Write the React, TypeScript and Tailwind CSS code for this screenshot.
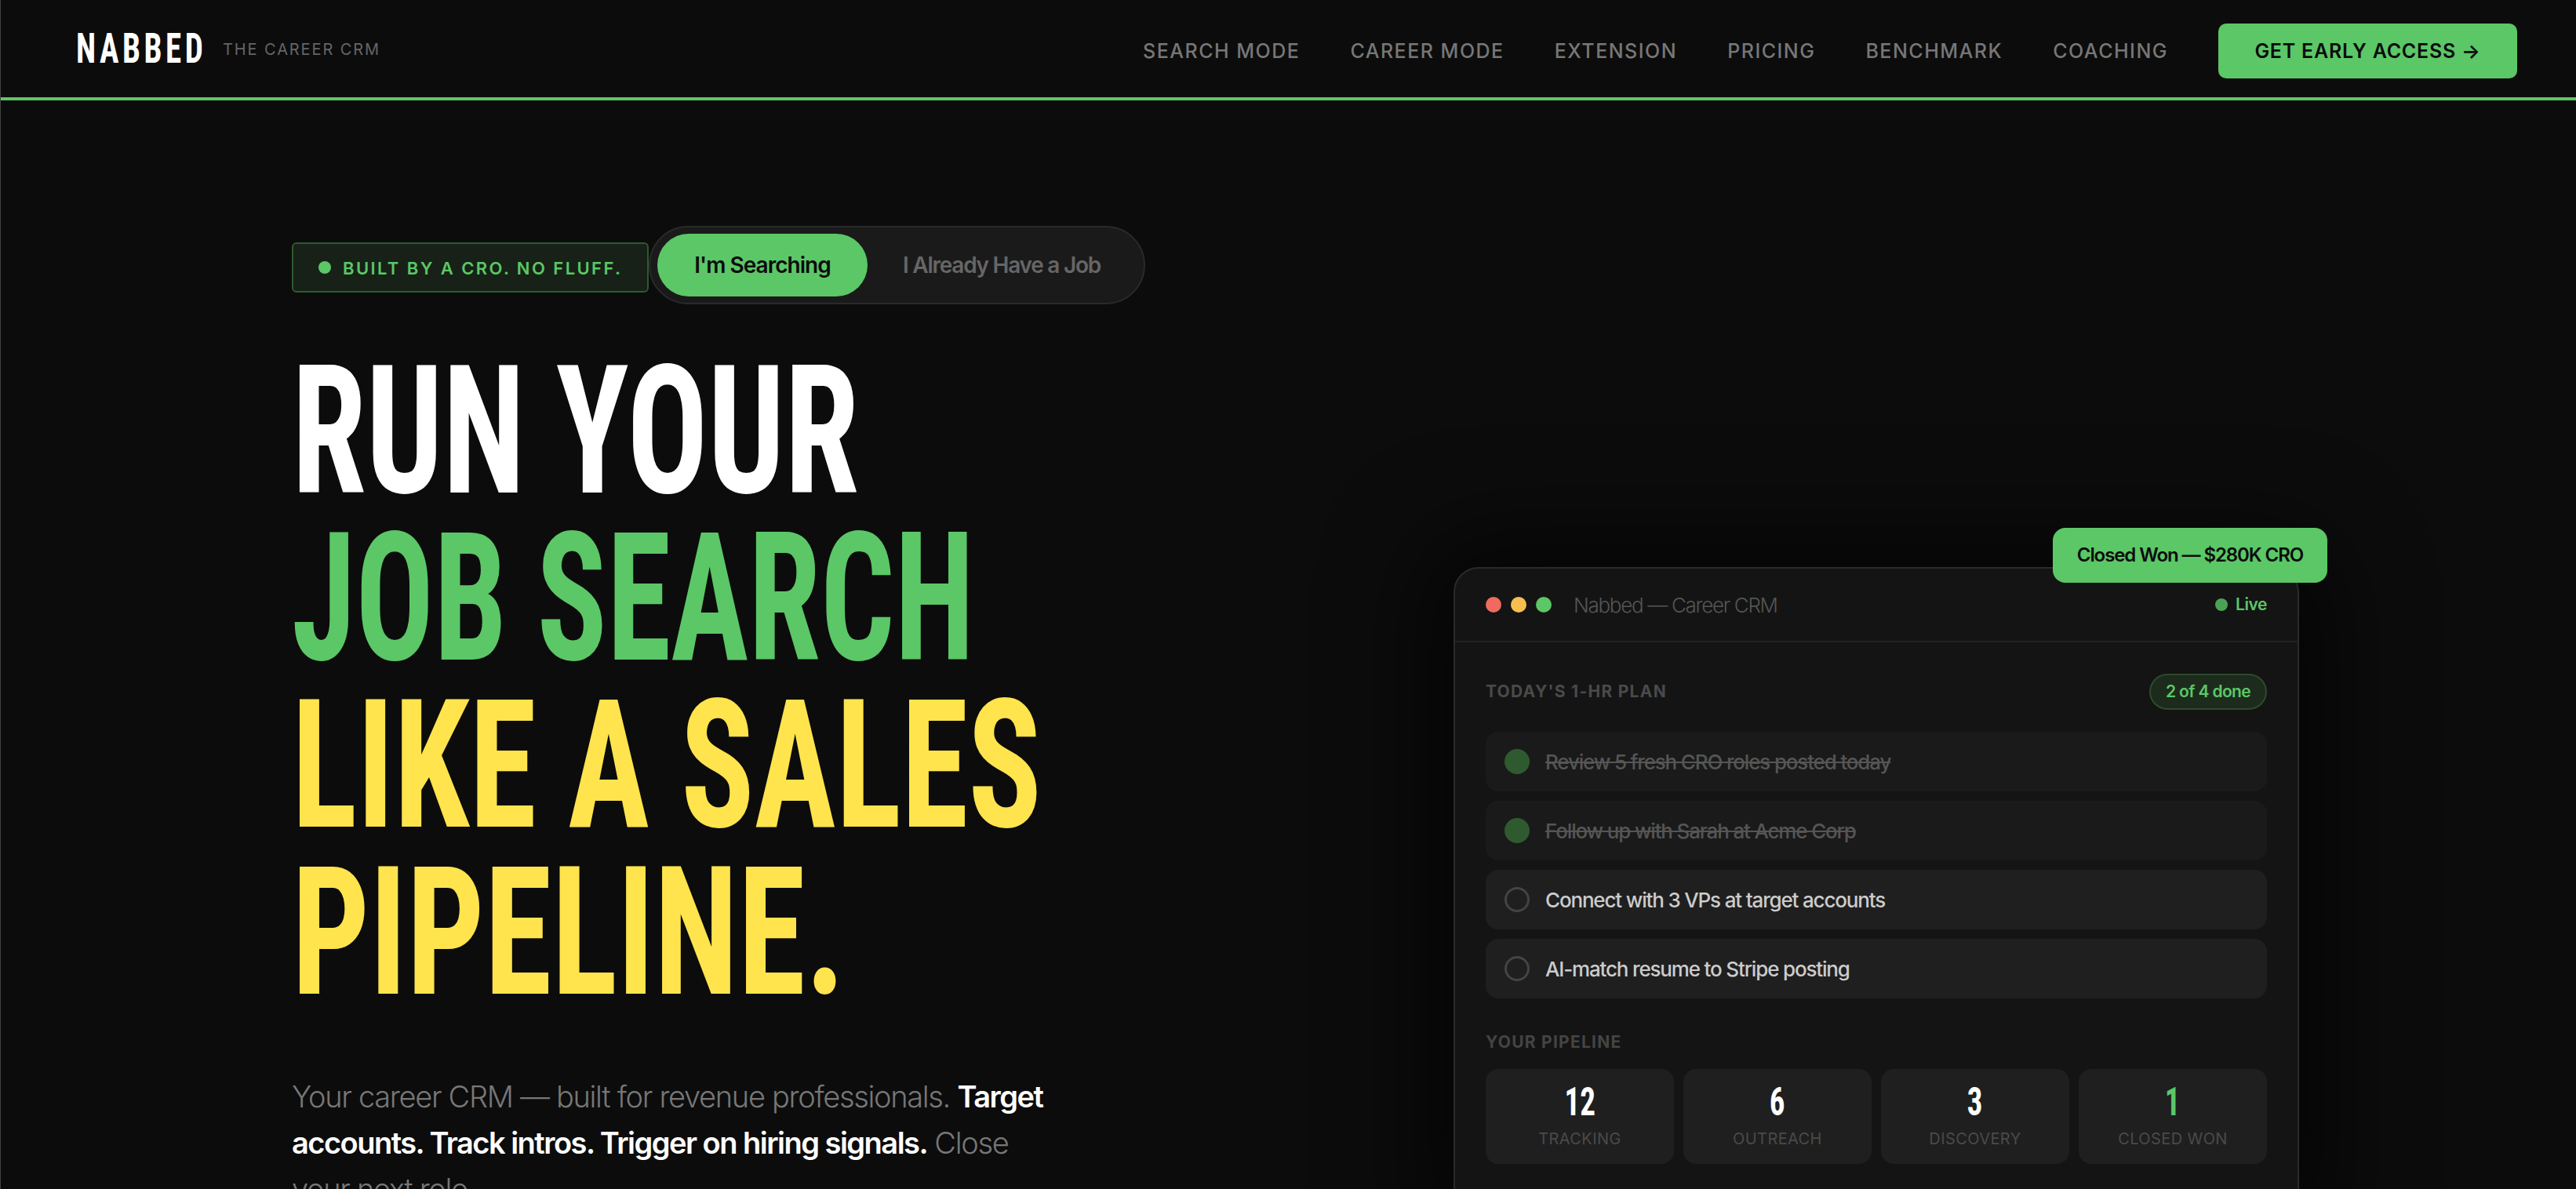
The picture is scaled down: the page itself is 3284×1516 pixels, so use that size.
const display = "font-['Roboto',sans-serif] [font-stretch:75%]";

const navLinks = ["SEARCH MODE", "CAREER MODE", "EXTENSION", "PRICING", "BENCHMARK", "COACHING"];

const tasks = [
  { label: "Review 5 fresh CRO roles posted today", done: true },
  { label: "Follow up with Sarah at Acme Corp", done: true },
  { label: "Connect with 3 VPs at target accounts", done: false },
  { label: "AI-match resume to Stripe posting", done: false },
];

const stats = [
  { value: "12", label: "TRACKING" },
  { value: "6", label: "OUTREACH" },
  { value: "3", label: "DISCOVERY" },
  { value: "1", label: "CLOSED WON", won: true },
];

function Nav() {
  return (
    <nav className="flex h-[128px] items-center justify-between border-b-4 border-[#5bc766] pl-[96px] pr-[75px]">
      <div className="flex items-center gap-[26px]">
        <span className={`${display} block w-[161px] origin-left scale-x-[0.76] text-[54px] leading-none font-bold tracking-[0.11em] whitespace-nowrap text-white`}>
          NABBED
        </span>
        <span className="mt-[2px] text-[20px] font-normal tracking-[0.095em] text-[#666]">THE CAREER CRM</span>
      </div>
      <div className="mt-[6px] flex items-center gap-[64px]">
        {navLinks.map((link) => (
          <a key={link} className="pt-[2px] text-[25px] font-medium tracking-[0.06em] text-[#777]">
            {link}
          </a>
        ))}
        <a className="flex h-[70px] w-[381px] items-center justify-center rounded-[10px] bg-[#5bc766] pt-[2px] text-[25px] font-semibold tracking-[0.03em] text-[#0c0c0c]">
          GET EARLY ACCESS →
        </a>
      </div>
    </nav>
  );
}

function Hero() {
  return (
    <div className="w-[1399px] shrink-0 pt-[160px] pl-[371px]">
      <div className="flex items-start">
        <div className="mt-[21px] flex h-[64px] w-[455px] shrink-0 items-center gap-[15px] rounded-[6px] border-2 border-[#2d5a2f] bg-[#172117] pl-[32px]">
          <span className="size-[16px] rounded-full bg-[#5bc766]" />
          <span className="pt-[2px] text-[22px] font-semibold tracking-[0.11em] whitespace-nowrap text-[#5bc766]">BUILT BY A CRO. NO FLUFF.</span>
        </div>
        <div className="flex h-[100px] w-[633px] shrink-0 items-center rounded-full border-2 border-[#2a2a2a] bg-[#1a1a1a] pl-[9px]">
          <span className="flex h-[80px] w-[268px] items-center justify-center rounded-full bg-[#5bc766] text-[28px] font-semibold tracking-[-0.035em] text-[#0c0c0c]">
            I'm Searching
          </span>
          <span className="flex h-[80px] flex-1 items-center justify-center pr-[10px] text-[28px] font-semibold tracking-[-0.045em] text-[#666]">
            I Already Have a Job
          </span>
        </div>
      </div>

      <h1 className={`${display} mt-[56px] text-[228px] leading-[213px] font-bold whitespace-nowrap text-white`}>
        <div className="origin-left scale-x-[0.751]">RUN YOUR</div>
        <div className="origin-left scale-x-[0.727] text-[#5bc766]">JOB SEARCH</div>
        <div className="origin-left scale-x-[0.763] text-[#ffe44d]">LIKE A SALES</div>
        <div className="origin-left scale-x-[0.766] text-[#ffe44d]">PIPELINE.</div>
      </h1>

      <p className="mt-[73px] text-[38px] leading-[59px] font-light tracking-[-0.035em] whitespace-nowrap text-[#777]">
        Your career CRM — built for revenue professionals.{" "}
        <strong className="font-semibold tracking-[-0.04em] text-white">Target</strong>
        <br />
        <strong className="font-semibold tracking-[-0.04em] text-white">accounts. Track intros. Trigger on hiring signals.</strong> Close
        <br />
        your next role.
      </p>
    </div>
  );
}

function TaskRow({ label, done }: { label: string; done: boolean }) {
  return (
    <div className={`flex h-[76px] items-center gap-[20px] rounded-[16px] pl-[24px] ${done ? "bg-[#1a1a1a]" : "bg-[#1f1f1f]"}`}>
      {done ? (
        <span className="size-[32px] rounded-full bg-[#2f5a2f]" />
      ) : (
        <span className="size-[32px] rounded-full border-[3px] border-[#444]" />
      )}
      <span className={`text-[26px] font-medium tracking-[-0.045em] ${done ? "text-[#555] line-through" : "text-[#ccc]"}`}>
        {label}
      </span>
    </div>
  );
}

function CrmCard() {
  return (
    <div className="relative mt-[595px] ml-[453px] h-fit w-[1078px] shrink-0 rounded-t-[32px] border-2 border-[#2a2a2a] bg-[#141414] shadow-[0_0_120px_40px_rgba(0,0,0,0.6)]">
      <div className="absolute -top-[52px] -right-[38px] flex h-[70px] w-[350px] items-center justify-center rounded-[16px] bg-[#5bc766] text-[24px] font-semibold tracking-[-0.045em] text-[#0c0c0c]">
        Closed Won — $280K CRO
      </div>

      <div className="flex h-[94px] items-center border-b-2 border-[#222] px-[39px]">
        <div className="flex gap-[12px]">
          <span className="size-[20px] rounded-full bg-[#f06a5e]" />
          <span className="size-[20px] rounded-full bg-[#f7bf4f]" />
          <span className="size-[20px] rounded-full bg-[#5bc766]" />
        </div>
        <span className="ml-[28px] text-[26px] font-light tracking-[-0.05em] text-[#555]">Nabbed — Career CRM</span>
        <div className="ml-auto flex items-center gap-[10px]">
          <span className="size-[16px] rounded-full bg-[#4aa354]" />
          <span className="text-[21px] font-semibold tracking-[-0.02em] text-[#5bc766]">Live</span>
        </div>
      </div>

      <div className="px-[39px] pt-[40px]">
        <div className="flex h-[46px] items-center justify-between">
          <span className="text-[21px] font-bold tracking-[0.06em] text-[#4a4a4a]">TODAY'S 1-HR PLAN</span>
          <span className="flex h-[46px] w-[150px] items-center justify-center rounded-full border-2 border-[#2d4a2d] bg-[#1d2b1d] text-[21px] font-semibold tracking-[-0.03em] text-[#5bc766]">
            2 of 4 done
          </span>
        </div>
        <div className="mt-[28px] flex flex-col gap-[12px]">
          {tasks.map((task) => (
            <TaskRow key={task.label} label={task.label} done={task.done} />
          ))}
        </div>

        <div className="mt-[42px] text-[21px] leading-[28px] font-bold tracking-[0.06em] text-[#444]">YOUR PIPELINE</div>
        <div className="mt-[20px] grid grid-cols-4 gap-[12px]">
          {stats.map((stat) => (
            <div key={stat.label} className="flex h-[121px] flex-col items-center rounded-[16px] bg-[#1f1f1f] pt-[14px]">
              <span className={`${display} scale-x-[0.78] text-[50px] leading-[56px] font-bold ${stat.won ? "text-[#5bc766]" : "text-white"}`}>
                {stat.value}
              </span>
              <span className="mt-[4px] text-[20px] font-normal tracking-[0.02em] text-[#4a4a4a]">{stat.label}</span>
            </div>
          ))}
        </div>
      </div>
      <div className="h-[60px]" />
    </div>
  );
}

export default function App() {
  return (
    <div className="h-[1516px] overflow-hidden border-l border-[#444] bg-[#0c0c0c] font-['Inter',sans-serif]">
      <Nav />
      <div className="flex">
        <Hero />
        <CrmCard />
      </div>
    </div>
  );
}
